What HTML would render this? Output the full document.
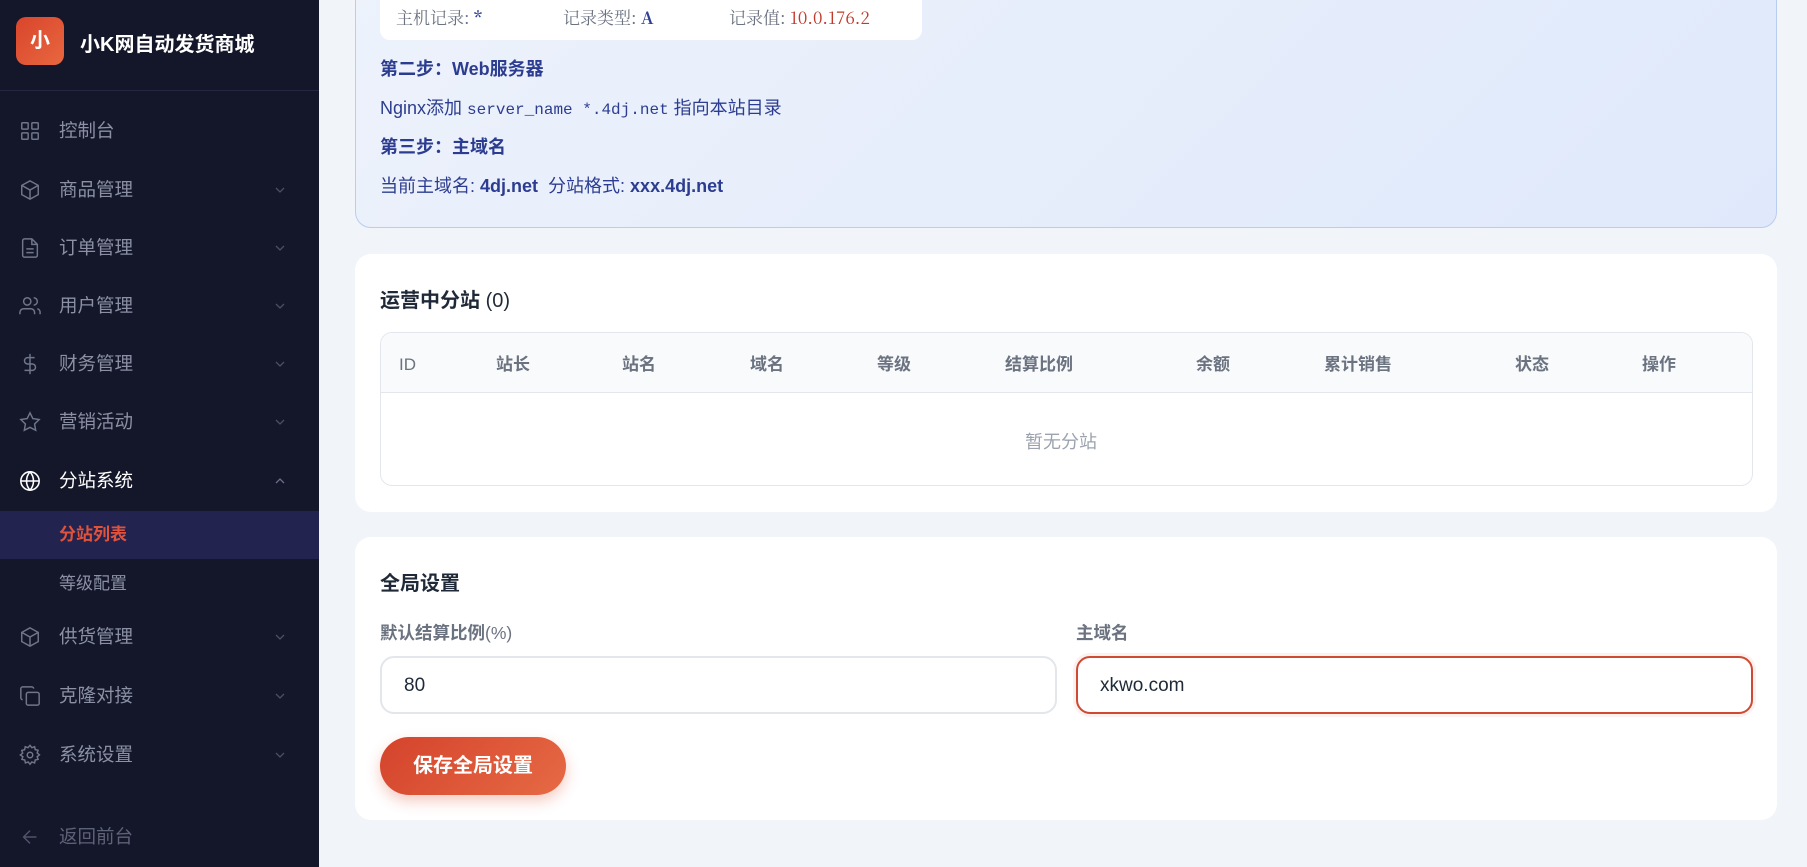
<!DOCTYPE html>
<html><head><meta charset="utf-8"><style>
*{box-sizing:border-box;margin:0;padding:0}
body{width:1807px;height:867px;overflow:hidden;background:#f1f4f8;font-family:"Liberation Sans","Noto Sans CJK SC",sans-serif;position:relative}
.sb{position:absolute;left:0;top:0;width:319px;height:867px;background:#141729}
.logo{position:absolute;left:16px;top:17px;width:48px;height:48px;border-radius:10px;background:linear-gradient(135deg,#d9452c,#e8673f);color:#fff;font-weight:bold;font-size:20px;text-align:center;line-height:48px}
.brand{position:absolute;left:80px;top:28px;color:#fff;font-weight:bold;font-size:20px}
.hr{position:absolute;left:0;top:90px;width:319px;height:1px;background:#232740}
.mi{position:absolute;left:0;width:319px;height:40px;color:#8b90a5;font-size:18.5px;line-height:40px}
.mi svg{position:absolute;left:19px;top:9px}
.mi span{position:absolute;left:59px}
.mi .ch{position:absolute;left:274px;top:14px}
.act{background:#232350;height:48px;line-height:48px;top:511px}
.a{position:absolute;left:355px;width:1422px;border-radius:16px;background:#fff}
.t{position:absolute;white-space:nowrap}
.th{position:absolute;top:353px;line-height:24px;color:#6b7280;font-weight:bold;font-size:17px}
.lab{color:#6b7280;font-weight:bold;font-size:17.5px}
.inp{position:absolute;top:656px;height:58px;border-radius:14px;background:#fff;font-size:19px;color:#1f2937;padding-left:22px;line-height:56px}
.rec{font-size:17px;color:#6b7280;top:4px;font-family:'Noto Serif CJK SC',serif}
</style></head><body>
<div class="sb">
<div class="logo">小</div>
<div class="brand">小K网自动发货商城</div>
<div class="hr"></div>
<div class="mi" style="top:111px"><svg width="22" height="22" viewBox="0 0 24 24" fill="none" stroke="#70758a" stroke-width="1.6"><rect x="3" y="3" width="7" height="7" rx="1"/><rect x="14" y="3" width="7" height="7" rx="1"/><rect x="3" y="14" width="7" height="7" rx="1"/><rect x="14" y="14" width="7" height="7" rx="1"/></svg><span>控制台</span></div>
<div class="mi" style="top:170px"><svg width="22" height="22" viewBox="0 0 24 24" fill="none" stroke="#70758a" stroke-width="1.6"><path d="M12 2l9 5v10l-9 5-9-5V7z"/><path d="M3 7l9 5 9-5M12 12v10"/></svg><span>商品管理</span><svg class="ch" width="12" height="12" viewBox="0 0 12 12" fill="none" stroke="#4a4f66" stroke-width="1.3"><path d="M2 4l4 4 4-4"/></svg></div>
<div class="mi" style="top:228px"><svg width="22" height="22" viewBox="0 0 24 24" fill="none" stroke="#70758a" stroke-width="1.6"><path d="M14 2H6a2 2 0 0 0-2 2v16a2 2 0 0 0 2 2h12a2 2 0 0 0 2-2V8z"/><path d="M14 2v6h6M8 13h8M8 17h8"/></svg><span>订单管理</span><svg class="ch" width="12" height="12" viewBox="0 0 12 12" fill="none" stroke="#4a4f66" stroke-width="1.3"><path d="M2 4l4 4 4-4"/></svg></div>
<div class="mi" style="top:286px"><svg width="22" height="22" viewBox="0 0 24 24" fill="none" stroke="#70758a" stroke-width="1.6"><circle cx="9" cy="7" r="4"/><path d="M1 21v-2a4 4 0 0 1 4-4h8a4 4 0 0 1 4 4v2M16 3a4 4 0 0 1 0 8M23 21v-2a4 4 0 0 0-3-4"/></svg><span>用户管理</span><svg class="ch" width="12" height="12" viewBox="0 0 12 12" fill="none" stroke="#4a4f66" stroke-width="1.3"><path d="M2 4l4 4 4-4"/></svg></div>
<div class="mi" style="top:344px"><svg width="22" height="22" viewBox="0 0 24 24" fill="none" stroke="#70758a" stroke-width="1.6"><path d="M12 1v22M17 5H9.5a3.5 3.5 0 0 0 0 7h5a3.5 3.5 0 0 1 0 7H6"/></svg><span>财务管理</span><svg class="ch" width="12" height="12" viewBox="0 0 12 12" fill="none" stroke="#4a4f66" stroke-width="1.3"><path d="M2 4l4 4 4-4"/></svg></div>
<div class="mi" style="top:402px"><svg width="22" height="22" viewBox="0 0 24 24" fill="none" stroke="#70758a" stroke-width="1.6"><path d="M12 2l3.1 6.3 6.9 1-5 4.9 1.2 6.8L12 17.8 5.8 21l1.2-6.8-5-4.9 6.9-1z"/></svg><span>营销活动</span><svg class="ch" width="12" height="12" viewBox="0 0 12 12" fill="none" stroke="#4a4f66" stroke-width="1.3"><path d="M2 4l4 4 4-4"/></svg></div>
<div class="mi" style="top:461px;color:#fff"><svg width="22" height="22" viewBox="0 0 24 24" fill="none" stroke="#fff" stroke-width="1.7"><circle cx="12" cy="12" r="10"/><path d="M2 12h20M12 2a15 15 0 0 1 0 20M12 2a15 15 0 0 0 0 20"/></svg><span>分站系统</span><svg class="ch" width="12" height="12" viewBox="0 0 12 12" fill="none" stroke="#6b7088" stroke-width="1.3"><path d="M2 8l4-4 4 4"/></svg></div>
<div class="mi act" style="color:#e0523a;font-weight:bold;font-size:17px"><span>分站列表</span></div>
<div class="mi" style="top:564px;font-size:17px"><span>等级配置</span></div>
<div class="mi" style="top:617px"><svg width="22" height="22" viewBox="0 0 24 24" fill="none" stroke="#70758a" stroke-width="1.6"><path d="M12 2l9 5v10l-9 5-9-5V7z"/><path d="M3 7l9 5 9-5M12 12v10"/></svg><span>供货管理</span><svg class="ch" width="12" height="12" viewBox="0 0 12 12" fill="none" stroke="#4a4f66" stroke-width="1.3"><path d="M2 4l4 4 4-4"/></svg></div>
<div class="mi" style="top:676px"><svg width="22" height="22" viewBox="0 0 24 24" fill="none" stroke="#70758a" stroke-width="1.6"><rect x="8" y="8" width="14" height="14" rx="2"/><path d="M4 16c-1 0-2-1-2-2V4c0-1 1-2 2-2h10c1 0 2 1 2 2"/></svg><span>克隆对接</span><svg class="ch" width="12" height="12" viewBox="0 0 12 12" fill="none" stroke="#4a4f66" stroke-width="1.3"><path d="M2 4l4 4 4-4"/></svg></div>
<div class="mi" style="top:735px"><svg width="22" height="22" viewBox="0 0 24 24" fill="none" stroke="#70758a" stroke-width="1.6"><circle cx="12" cy="12" r="3"/><path d="M12 1.5l2 2.5 3-1 .7 3.1 3.1.7-1 3 2.5 2-2.5 2 1 3-3.1.7-.7 3.1-3-1-2 2.5-2-2.5-3 1-.7-3.1-3.1-.7 1-3L1.5 12 4 10l-1-3 3.1-.7L6.8 3l3 1z"/></svg><span>系统设置</span><svg class="ch" width="12" height="12" viewBox="0 0 12 12" fill="none" stroke="#4a4f66" stroke-width="1.3"><path d="M2 4l4 4 4-4"/></svg></div>
<div class="mi" style="top:817px;color:#5d6278"><svg width="22" height="22" viewBox="0 0 24 24" fill="none" stroke="#4f546a" stroke-width="1.6"><path d="M19 12H5M12 19l-7-7 7-7"/></svg><span>返回前台</span></div>
</div>

<div class="a" style="top:-20px;height:248px;background:linear-gradient(135deg,#edf2fb,#dfe9fb);border:1px solid #b9cdf0"></div>
<div style="position:absolute;left:380px;top:-10px;width:542px;height:50px;background:#fff;border-radius:10px"></div>
<div class="t rec" style="left:396px">主机记录: <b style="color:#2d3f99">*</b></div>
<div class="t rec" style="left:563px">记录类型: <b style="color:#2d3f99">A</b></div>
<div class="t rec" style="left:729px">记录值: <span style="color:#c0392b">10.0.176.2</span></div>
<div class="t" style="left:380px;top:55px;font-weight:bold;font-size:18px;color:#2c3d91">第二步：Web服务器</div>
<div class="t" style="left:380px;top:94px;font-size:18px;color:#2c3d91">Nginx添加 <span style="font-family:'Liberation Mono',monospace;font-size:16px">server_name *.4dj.net</span> 指向本站目录</div>
<div class="t" style="left:380px;top:133px;font-weight:bold;font-size:18px;color:#2c3d91">第三步：主域名</div>
<div class="t" style="left:380px;top:172px;font-size:18px;color:#2c3d91">当前主域名: <b>4dj.net</b>&nbsp; 分站格式: <b>xxx.4dj.net</b></div>

<div class="a" style="top:254px;height:258px"></div>
<div class="t" style="left:380px;top:284px;font-weight:bold;font-size:20px;color:#1f2937">运营中分站 <span style="font-weight:normal">(0)</span></div>
<div style="position:absolute;left:380px;top:332px;width:1373px;height:154px;border:1px solid #e3e7ed;border-radius:12px;overflow:hidden">
<div style="height:60px;background:#f8fafc;border-bottom:1px solid #e3e7ed"></div></div>
<div class="th" style="left:399px;font-weight:normal">ID</div>
<div class="th" style="left:496px">站长</div>
<div class="th" style="left:622px">站名</div>
<div class="th" style="left:750px">域名</div>
<div class="th" style="left:877px">等级</div>
<div class="th" style="left:1005px">结算比例</div>
<div class="th" style="left:1196px">余额</div>
<div class="th" style="left:1324px">累计销售</div>
<div class="th" style="left:1515px">状态</div>
<div class="th" style="left:1642px">操作</div>
<div class="t" style="left:1025px;top:428px;font-size:18px;color:#9ca3af">暂无分站</div>

<div class="a" style="top:537px;height:283px"></div>
<div class="t" style="left:380px;top:567px;font-weight:bold;font-size:20px;color:#1f2937">全局设置</div>
<div class="t lab" style="left:380px;top:620px">默认结算比例<span style="font-weight:normal">(%)</span></div>
<div class="t lab" style="left:1076px;top:620px">主域名</div>
<div class="inp" style="left:380px;width:677px;border:2px solid #e3e6eb">80</div>
<div class="inp" style="left:1076px;width:677px;border:2px solid #cf4a33;box-shadow:0 0 0 3px rgba(207,74,51,.08)">xkwo.com</div>
<div style="position:absolute;left:380px;top:737px;width:186px;height:58px;border-radius:29px;background:linear-gradient(135deg,#d4432c,#e66a44);box-shadow:0 6px 14px rgba(217,80,50,.3);color:#fff;font-weight:bold;font-size:20px;text-align:center;line-height:58px">保存全局设置</div>
</body></html>
